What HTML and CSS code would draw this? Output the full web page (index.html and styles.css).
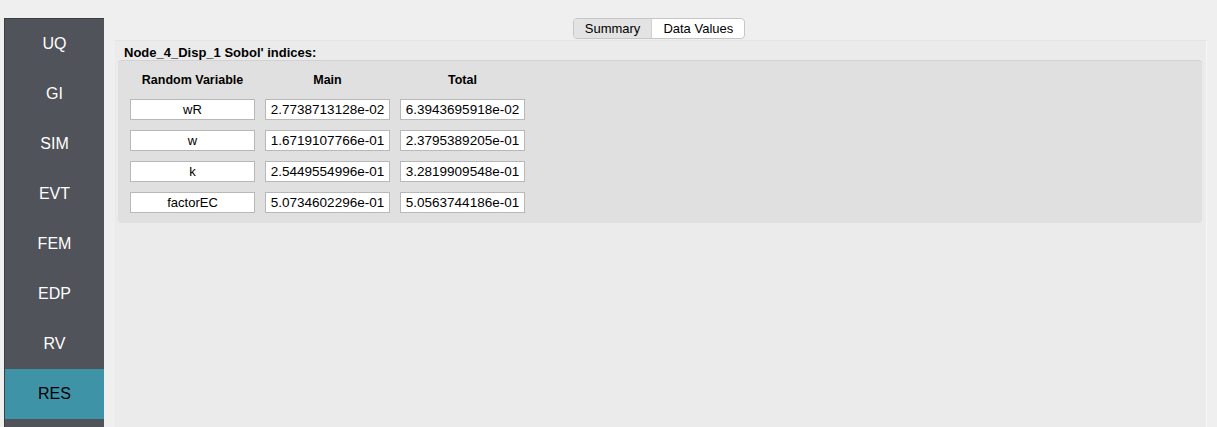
FILE: index.html
```html
<!DOCTYPE html>
<html>
<head>
<meta charset="utf-8">
<link rel="stylesheet" href="styles.css">
</head>
<body>
<div class="app">
  <nav class="sidebar">
    <div class="nav-item">UQ</div>
    <div class="nav-item">GI</div>
    <div class="nav-item">SIM</div>
    <div class="nav-item">EVT</div>
    <div class="nav-item">FEM</div>
    <div class="nav-item">EDP</div>
    <div class="nav-item">RV</div>
    <div class="nav-item active">RES</div>
  </nav>
  <main class="main">
    <div class="tabs-row">
      <div class="tabs">
        <div class="tab selected">Summary</div>
        <div class="tab">Data Values</div>
      </div>
    </div>
    <section class="panel">
      <div class="title">Node_4_Disp_1 Sobol' indices:</div>
      <div class="group">
        <div class="grid">
          <div class="head">Random Variable</div>
          <div class="head">Main</div>
          <div class="head">Total</div>

          <div class="cell name">wR</div>
          <div class="cell">2.7738713128e-02</div>
          <div class="cell">6.3943695918e-02</div>

          <div class="cell name">w</div>
          <div class="cell">1.6719107766e-01</div>
          <div class="cell">2.3795389205e-01</div>

          <div class="cell name">k</div>
          <div class="cell">2.5449554996e-01</div>
          <div class="cell">3.2819909548e-01</div>

          <div class="cell name">factorEC</div>
          <div class="cell">5.0734602296e-01</div>
          <div class="cell">5.0563744186e-01</div>
        </div>
      </div>
    </section>
  </main>
</div>
</body>
</html>
```

FILE: styles.css
```css
html, body {
  margin: 0;
  padding: 0;
  background: #efefef;
  font-family: "Liberation Sans", Arial, sans-serif;
  color: #000;
}

.app {
  display: flex;
  align-items: stretch;
  height: 427px;
  box-sizing: border-box;
  padding: 18px 10px 0 4px;
}

.sidebar {
  width: 100px;
  background: #50535a;
  border-left: 1px solid #3c3e43;
  border-top: 1px solid #3c3e43;
  display: flex;
  flex-direction: column;
  box-sizing: border-box;
}

.nav-item {
  height: 50px;
  display: flex;
  align-items: center;
  justify-content: center;
  color: #ffffff;
  font-size: 16px;
}

.nav-item.active {
  background: #3f93a7;
  color: #000;
}

.main {
  flex: 1;
  margin-left: 11px;
  display: flex;
  flex-direction: column;
}

.tabs-row {
  display: flex;
  justify-content: center;
  height: 22px;
  padding-right: 4px;
}

.tabs {
  display: flex;
  height: 21px;
  border: 1px solid #c6c6c6;
  border-radius: 4px;
  background: #fff;
  overflow: hidden;
  box-sizing: border-box;
}

.tab {
  font-size: 13px;
  line-height: 19px;
  padding: 0 11px 0 11px;
}

.tab.selected {
  background: #e3e3e3;
  border-right: 1px solid #d0d0d0;
}

.panel {
  flex: 1;
  background: #ebebeb;
  border-top: 1px solid #e4e4e4;
  border-right: 1px solid #f6f6f6;
  padding: 4px 4px 0 3px;
}

.title {
  font-size: 13px;
  font-weight: bold;
  padding-left: 6px;
  height: 15px;
  line-height: 15px;
}

.group {
  background: #e0e0e0;
  border-top: 1px solid #d2d2d2;
  border-radius: 4px;
  height: 163px;
  box-sizing: border-box;
  padding: 11px 0 0 12px;
}

.grid {
  display: grid;
  grid-template-columns: 125px 125px 125px;
  column-gap: 10px;
  row-gap: 10px;
}

.head {
  font-size: 12.5px;
  font-weight: bold;
  text-align: center;
  height: 17px;
  line-height: 17px;
}

.cell {
  height: 21px;
  box-sizing: border-box;
  background: #fff;
  border: 1px solid #b8b8b8;
  font-size: 13.5px;
  line-height: 19px;
  padding: 0 1px;
  text-align: center;
  white-space: nowrap;
  overflow: hidden;
}

.cell.name {
  font-size: 13px;
}
```
